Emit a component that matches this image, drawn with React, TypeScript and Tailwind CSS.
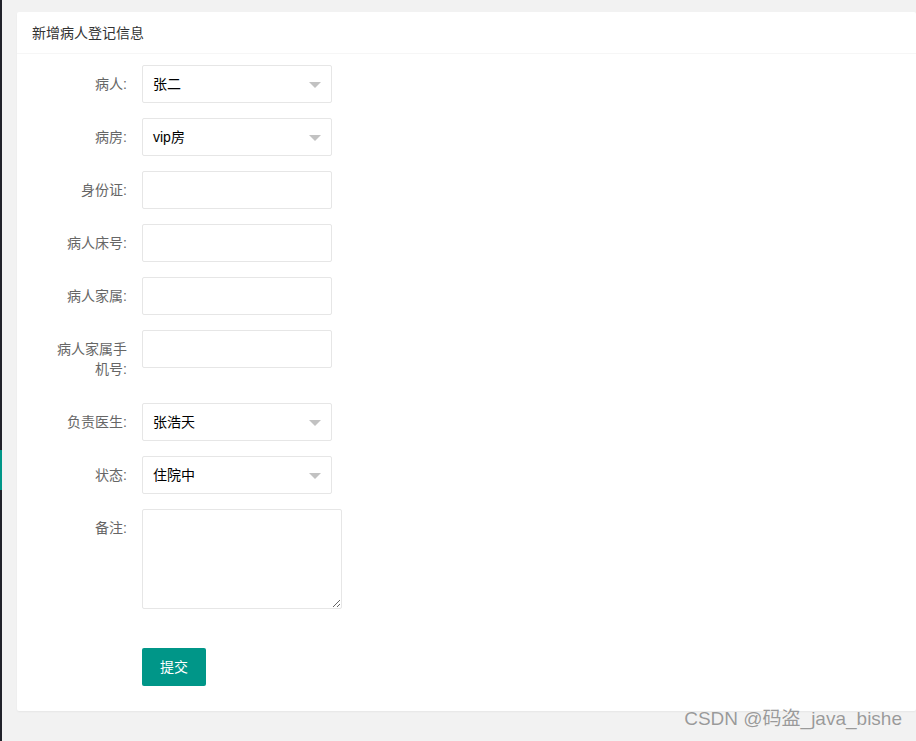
const font = { fontFamily: '"Liberation Sans", "Noto Sans CJK SC", sans-serif' };

type Field = { label: string; kind: 'select' | 'input'; value?: string };

const fields: Field[] = [
  { label: '病人:', kind: 'select', value: '张二' },
  { label: '病房:', kind: 'select', value: 'vip房' },
  { label: '身份证:', kind: 'input' },
  { label: '病人床号:', kind: 'input' },
  { label: '病人家属:', kind: 'input' },
  { label: '病人家属手机号:', kind: 'input' },
  { label: '负责医生:', kind: 'select', value: '张浩天' },
  { label: '状态:', kind: 'select', value: '住院中' },
];

function SelectBox({ value }: { value?: string }) {
  return (
    <div className="relative flex h-[38px] w-[190px] items-center rounded-[2px] border border-[#e6e6e6] bg-white pl-[10px] text-[14px] text-black">
      {value}
      {/* caret */}
      <span className="absolute right-[10px] top-[16px] h-0 w-0 border-x-[6px] border-t-[6px] border-x-transparent border-t-[#c2c2c2]" />
    </div>
  );
}

export default function App() {
  return (
    <div className="relative flex min-h-[741px] bg-[#f2f2f2]" style={font}>
      {/* side rail peeking in */}
      <div className="flex w-[2px] flex-col bg-[#20222a]">
        <div className="h-[450px]" />
        <div className="h-[40px] bg-[#009688]" />
      </div>

      <div className="flex-1 pl-[15px] pt-[12px]">
        <div className="rounded-[2px] bg-white shadow-[0_1px_2px_0_rgba(0,0,0,0.05)]">
          <div className="h-[42px] border-b border-[#f6f6f6] px-[15px] text-[14px] leading-[42px] text-[#333]">
            新增病人登记信息
          </div>

          <div className="px-[15px] pb-[10px] pt-[11px]">
            {fields.map((f) => (
              <div key={f.label} className="mb-[15px] flex">
                <label className="w-[110px] shrink-0 px-[15px] py-[9px] text-right text-[14px] leading-[20px] text-[#666]">
                  {f.label}
                </label>
                {f.kind === 'select' ? (
                  <SelectBox value={f.value} />
                ) : (
                  <input className="h-[38px] w-[190px] rounded-[2px] border border-[#e6e6e6] bg-white px-[10px] text-[14px] outline-none" />
                )}
              </div>
            ))}

            <div className="mb-[15px] flex">
              <label className="w-[110px] shrink-0 px-[15px] py-[9px] text-right text-[14px] leading-[20px] text-[#666]">
                备注:
              </label>
              <textarea className="h-[100px] w-[200px] rounded-[2px] border border-[#e6e6e6] bg-white px-[10px] py-[6px] text-[14px] outline-none" />
            </div>

            <div className="mb-[15px] flex pl-[110px] pt-[24px]">
              <button className="h-[38px] rounded-[2px] bg-[#009688] px-[18px] text-[14px] text-white">
                提交
              </button>
            </div>
          </div>
        </div>
      </div>

      {/* watermark */}
      <div className="absolute bottom-[8px] right-[14px] text-[19px] text-[#9a9a9a] [text-shadow:0_0_1px_#fff]">
        CSDN @码盗_java_bishe
      </div>
    </div>
  );
}
